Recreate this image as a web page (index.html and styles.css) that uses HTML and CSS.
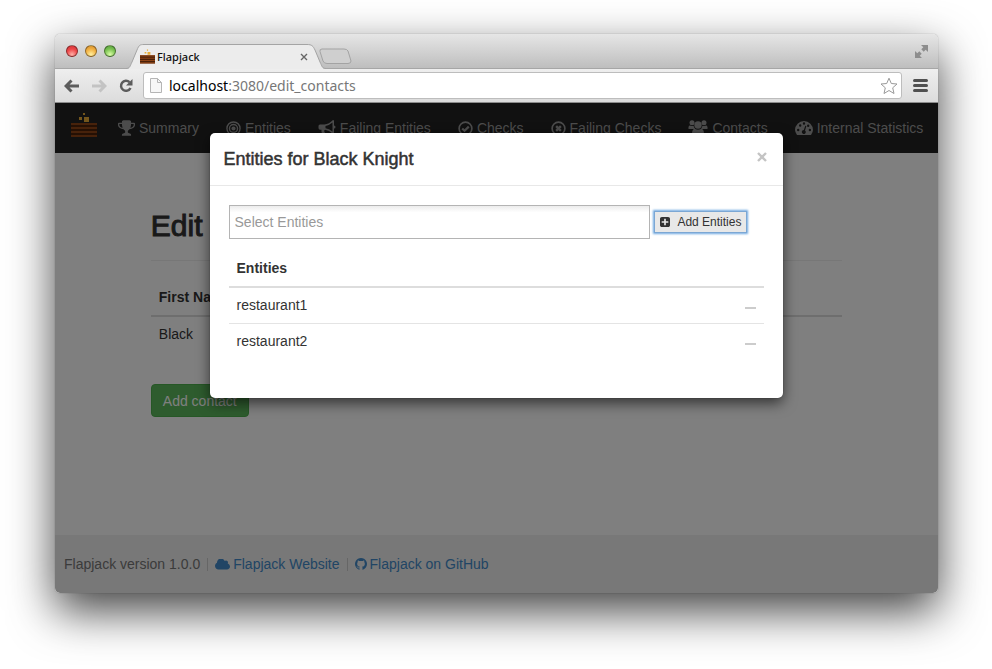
FILE: index.html
```html
<!DOCTYPE html>
<html lang="en">
<head>
<meta charset="utf-8">
<title>Flapjack</title>
<link rel="stylesheet" href="styles.css">
</head>
<body>
<svg class="defs" aria-hidden="true">
  <defs>
    <symbol id="flapjack" viewBox="0 0 26 26">
      <path fill="#e8ac38" d="M12 1h2v2h-2zM8 5h3v3H8zM13 5h5v5h-5z"/>
      <path class="stack-gap" d="M0 11h26v14H0z"/>
      <path class="stack" d="M0 11h26v2H0zM0 15h26v2H0zM0 19h26v2H0zM0 23h26v2H0z"/>
    </symbol>
    <symbol id="page" viewBox="0 0 12 15"><path d="M.5.5h7l4 4v10H.5z" fill="#f7f7f7" stroke="#b5b5b5"/><path d="M7.500 .5v4h4" fill="none" stroke="#b5b5b5"/></symbol>
  </defs>
</svg>
<div class="window">
  <header class="titlebar">
    <div class="lights">
      <button class="light red" aria-label="Close window"></button>
      <button class="light amber" aria-label="Minimise window"></button>
      <button class="light green" aria-label="Zoom window"></button>
    </div>
    <div class="tab">
      <svg class="tab-shape" viewBox="0 0 200 25" aria-hidden="true"><path d="M0 25C4 25 4 22 6 18L11 6C13 1 14 .5 18 .5H181C186 .5 187 2 189 6L194 18C196 22 196 25 200 25Z" fill="#ececec"/><path d="M0 24.500C4 24.500 4 22 6 18L11 6C13 1 14 .5 18 .5H181C186 .5 187 2 189 6L194 18C196 22 196 24.500 200 24.500" fill="none" stroke="#a4a4a4"/></svg>
      <svg class="favicon" aria-hidden="true"><use href="#flapjack"/></svg>
      <span class="tab-title">Flapjack</span>
      <button class="tab-close" aria-label="Close tab"><svg viewBox="0 0 8 8" width="8" height="8"><path d="M1 1l6 6M7 1L1 7" stroke="#666" stroke-width="1.400"/></svg></button>
    </div>
    <button class="new-tab" aria-label="New tab"><svg viewBox="0 0 33 17" width="33" height="17"><path d="M3 1H25Q28 1 29 3L32 13Q32 15.500 29 15.500H8Q5 15.500 4 13L1 3.500Q.5 1 3 1Z" fill="#cfcfcf" stroke="#a3a3a3"/></svg></button>
    <button class="fullscreen" aria-label="Full screen"><svg viewBox="0 0 15 15" width="15" height="15"><path d="M7 1h7v7l-2.300-2.300-2 2-2.400-2.400 2-2zM8 14H1V7l2.300 2.300 2-2 2.400 2.400-2 2z" fill="#8d8d8d"/></svg></button>
  </header>
  <div class="toolbar">
    <button class="tool" aria-label="Back"><svg viewBox="0 0 16 14" width="16" height="14"><path d="M7.500 1.500L2 7l5.500 5.500M2.500 7H15" fill="none" stroke="#5c5c5c" stroke-width="3"/></svg></button>
    <button class="tool" aria-label="Forward"><svg viewBox="0 0 16 14" width="16" height="14"><path d="M8.500 1.500L14 7l-5.500 5.500M13.500 7H1" fill="none" stroke="#c3c3c3" stroke-width="3"/></svg></button>
    <button class="tool" aria-label="Reload"><svg viewBox="0 0 16 14" width="16" height="14"><path d="M11.500 3.200A5 5 0 1 0 12.500 9" fill="none" stroke="#5c5c5c" stroke-width="2.500"/><path d="M14.500 0v6.500H8z" fill="#5c5c5c"/></svg></button>
    <div class="address">
      <svg width="12" height="15" aria-hidden="true"><use href="#page"/></svg>
      <span class="url"><b>localhost</b>:3080/edit_contacts</span>
      <button class="star" aria-label="Bookmark"><svg viewBox="0 0 18 18" width="18" height="18"><path d="M9 1.200l2.300 5.300 5.700.5-4.300 3.800 1.300 5.700L9 13.500l-5 3 1.300-5.700L1 7l5.700-.5z" fill="#fff" stroke="#999" stroke-linejoin="round"/></svg></button>
    </div>
    <button class="menu" aria-label="Menu"><svg viewBox="0 0 15 13" width="15" height="13"><path d="M1.500 1.500h12M1.500 6.500h12M1.500 11.500h12" stroke="#505050" stroke-width="3" stroke-linecap="round"/></svg></button>
  </div>
  <div class="viewport">
    <nav class="navbar">
      <a class="brand" href="#" aria-label="Flapjack home"><svg width="26" height="26"><use href="#flapjack"/></svg></a>
      <a href="#"><svg viewBox="64 128 1664 1536" width="17" height="16"><path d="M522 883q-74-162-74-371h-256v96q0 78 94.500 162t235.500 113zm1078-275v-96h-256q0 209-74 371 141-29 235.500-113t94.500-162zm128-128v128q0 71-41.500 143t-112 130-173 97.500-215.500 44.500q-42 54-95 95-38 34-52.500 72.500t-14.500 89.500q0 54 30.500 91t97.500 37q75 0 133.500 45.500t58.500 114.500v64q0 14-9 23t-23 9h-832q-14 0-23-9t-9-23v-64q0-69 58.500-114.500t133.500-45.500q67 0 97.500-37t30.500-91q0-51-14.500-89.500t-52.500-72.500q-53-41-95-95-113-5-215.500-44.500t-173-97.500-112-130-41.500-143v-128q0-40 28-68t68-28h288v-96q0-66 47-113t113-47h576q66 0 113 47t47 113v96h288q40 0 68 28t28 68z"/></svg>Summary</a>
      <a href="#"><svg viewBox="0 0 16 16" width="15" height="15"><g fill="none" stroke="currentColor" stroke-width="1.500"><circle cx="8" cy="8" r="7"/><circle cx="8" cy="8" r="4.300"/></g><circle cx="8" cy="8" r="2.200"/></svg>Entities</a>
      <a href="#"><svg viewBox="0 0 18 16" width="18" height="16"><path fill-rule="evenodd" d="M16 1v4.500a1.500 1.500 0 0 1 0 3V13q0 1-1 1-4-4-8-4.300-1.500.8-.6 2 .1 1 1.600 2-1 1.500-3.500 1-1.500-2.500-1-5H2Q.5 9.500.5 8V6Q.5 4.500 2 4.500h4.500Q11 4 15 0q1 0 1 1zM14.500 2.500Q11 5.500 7.500 5.900v2.300q3.500.4 7 3.300z"/></svg>Failing Entities</a>
      <a href="#"><svg viewBox="0 0 16 16" width="15" height="15"><g fill="none" stroke="currentColor"><circle cx="8" cy="8" r="6.800" stroke-width="1.800"/><path d="M4.500 8L7 10.500l4.500-4.500" stroke-width="2.300"/></g></svg>Checks</a>
      <a href="#"><svg viewBox="0 0 16 16" width="15" height="15"><g fill="none" stroke="currentColor"><circle cx="8" cy="8" r="6.800" stroke-width="1.800"/><path d="M5.500 5.500l5 5M10.500 5.500l-5 5" stroke-width="2.500"/></g></svg>Failing Checks</a>
      <a href="#"><svg viewBox="0 0 20 18" width="20" height="18"><circle cx="4" cy="3.800" r="2.500"/><circle cx="16" cy="3.800" r="2.500"/><circle cx="10" cy="6" r="3.700"/><path d="M.5 10V8q.5-2 1.500-1.500 2 1 3.500.3.500 2 1.800 3.200zM19.500 10V8q-.5-2-1.500-1.500-2 1-3.500.3-.5 2-1.800 3.200zM4 15q0-5 2.700-5.300 3.300 2 6.600 0Q16 10 16 15q0 2-2 2H6q-2 0-2-2z"/></svg>Contacts</a>
      <a href="#"><svg viewBox="0 0 18 16" width="18" height="16"><path fill-rule="evenodd" d="M2 15Q0 12 0 10a9 9 0 0 1 18 0q0 2-2 5zM2 10a1.200 1.200 0 1 0 2.400 0A1.200 1.200 0 1 0 2 10zM4 5.500a1.200 1.200 0 1 0 2.400 0A1.200 1.200 0 1 0 4 5.500zM7.800 3.500a1.200 1.200 0 1 0 2.400 0A1.200 1.200 0 1 0 7.800 3.500zM12 5.800a1.200 1.200 0 1 0 2.400 0A1.200 1.200 0 1 0 12 5.800zM13.700 10a1.200 1.200 0 1 0 2.400 0A1.200 1.200 0 1 0 13.700 10zM10.300 5.800L8.800 10a2 2 0 1 0 1.200.4l1.400-4.300z"/></svg>Internal Statistics</a>
    </nav>
    <main class="content">
      <h1>Edit contacts</h1>
      <table>
        <thead><tr><th>First Name</th></tr></thead>
        <tbody><tr><td>Black</td></tr></tbody>
      </table>
      <button class="add-contact">Add contact</button>
    </main>
    <footer class="footer">
      <span>Flapjack version 1.0.0</span>
      <i class="rule"></i>
      <a href="#"><svg viewBox="0 256 1920 1280" width="15" height="11"><path d="M1920 1152q0 159-112.500 271.500t-271.500 112.500h-1088q-185 0-316.500-131.500t-131.500-316.500q0-132 71-241.500t187-163.500q-2-28-2-43 0-212 150-362t362-150q158 0 286.500 88t187.500 230q70-62 166-62 106 0 181 75t75 181q0 75-41 138 129 30 213 134.500t84 239.500z"/></svg>Flapjack Website</a>
      <i class="rule"></i>
      <a href="#"><svg viewBox="128 128 1536 1536" width="12" height="12"><path d="M896 128q209 0 385.500 103t279.500 279.500 103 385.500q0 251-146.500 451.500t-378.500 277.500q-27 5-40-7t-13-30q0-3 .5-76.500t.5-134.500q0-97-52-142 57-6 102.500-18t94-39 81-66.500 53-105 20.500-150.500q0-119-79-206 37-91-8-204-28-9-81 11t-92 44l-38 24q-93-26-192-26t-192 26q-16-11-42.500-27t-83.500-38.500-85-13.500q-45 113-8 204-79 87-79 206 0 85 20.500 150t52.500 105 80.500 67 94 39 102.500 18q-39 36-49 103-21 10-45 15t-57 5-65.500-21.500-55.500-62.500q-19-32-48.500-52t-49.500-24l-20-3q-21 0-29 4.500t-5 11.500 9 14 13 12l7 5q22 10 43.500 38t31.500 51l10 23q13 38 44 61.500t67 30 69.500 7 55.500-3.500l23-4q0 38 .5 88.500t.5 54.500q0 18-13 30t-40 7q-232-77-378.500-277.500t-146.500-451.500q0-209 103-385.500t279.500-279.500 385.500-103z"/></svg>Flapjack on GitHub</a>
    </footer>
    <div class="backdrop">
      <section class="modal" role="dialog" aria-labelledby="modal-title">
        <header class="modal-header">
          <h2 id="modal-title">Entities for Black Knight</h2>
          <button class="close" aria-label="Close"><svg viewBox="0 0 10 10" width="10" height="10"><path d="M1 1l8 8M9 1L1 9" stroke="#c4c4c4" stroke-width="2.400"/></svg></button>
        </header>
        <div class="modal-body">
          <form class="picker">
            <input type="text" placeholder="Select Entities" aria-label="Select Entities">
            <button type="button" class="add"><svg viewBox="128 128 1536 1536" width="10" height="10"><path d="M1408 960v-128q0-26-19-45t-45-19h-320v-320q0-26-19-45t-45-19h-128q-26 0-45 19t-19 45v320h-320q-26 0-45 19t-19 45v128q0 26 19 45t45 19h320v320q0 26 19 45t45 19h128q26 0 45-19t19-45v-320h320q26 0 45-19t19-45zm256-544v960q0 119-84.500 203.500t-203.500 84.500h-960q-119 0-203.500-84.500t-84.500-203.500v-960q0-119 84.500-203.500t203.500-84.500h960q119 0 203.500 84.500t84.500 203.500z"/></svg>Add Entities</button>
          </form>
          <table>
            <thead><tr><th colspan="2">Entities</th></tr></thead>
            <tbody>
              <tr><td>restaurant1</td><td class="action"><button class="remove" aria-label="Remove restaurant1"></button></td></tr>
              <tr><td>restaurant2</td><td class="action"><button class="remove" aria-label="Remove restaurant2"></button></td></tr>
            </tbody>
          </table>
        </div>
      </section>
    </div>
  </div>
</div>
</body>
</html>
```
FILE: styles.css
```css
* { box-sizing: border-box; }

body {
  margin: 0;
  min-height: 100vh;
  padding: 34px 54px 76px 55px;
  display: flex;
  background: #fff;
  color: #333;
  font: 14px/20px "Liberation Sans", Arial, sans-serif;
}

button {
  padding: 0;
  border: 0;
  background: none;
  color: inherit;
  font: inherit;
}

svg { display: block; flex: none; fill: currentColor; }
a { text-decoration: none; }
.defs { position: absolute; width: 0; height: 0; }
.stack { fill: #8f4416; }
.stack-gap { fill: #4a2008; }

/* Browser window */
.window {
  flex: 1;
  min-width: 0;
  display: flex;
  flex-direction: column;
  border-radius: 5px;
  box-shadow: 0 0 1px rgba(0, 0, 0, .5), 0 18px 46px rgba(0, 0, 0, .74);
}

.titlebar {
  display: flex;
  align-items: flex-end;
  height: 35px;
  padding: 0 9px 0 11px;
  border-bottom: 1px solid #a6a6a6;
  border-radius: 5px 5px 0 0;
  background: linear-gradient(#e6e6e6, #bebebe);
}

.lights { display: flex; gap: 7px; align-self: center; }

.light {
  width: 12px;
  height: 12px;
  border: 1px solid rgba(0, 0, 0, .4);
  border-radius: 50%;
}
.red { background: radial-gradient(circle at 50% 85%, #ffb0a8, #ee4648 55%, #c93436); }
.amber { background: radial-gradient(circle at 50% 85%, #fff0a0, #f2b142 55%, #cf8a2c); }
.green { background: radial-gradient(circle at 50% 85%, #dcffa8, #7dc454 55%, #529a3a); }

.tab {
  position: relative;
  display: flex;
  align-items: center;
  gap: 2px;
  width: 200px;
  height: 25px;
  margin: 0 -7px -1px 10px;
  padding: 0 18px 0 14px;
}
.tab-shape { position: absolute; inset: 0; width: 200px; height: 25px; }
.favicon, .tab-title, .tab-close { position: relative; }
.favicon { width: 15px; height: 15px; }
.tab-title { flex: 1; color: #111; font: 500 11px/16px "Noto Sans", sans-serif; }

.new-tab { margin-bottom: 3px; }
.fullscreen { margin-left: auto; align-self: center; }

.toolbar {
  display: flex;
  align-items: center;
  gap: 11px;
  height: 34px;
  padding: 0 10px 0 9px;
  border-bottom: 1px solid #8c8c8c;
  background: linear-gradient(#eee, #dcdcdc);
}

.address {
  flex: 1;
  display: flex;
  align-items: center;
  gap: 7px;
  height: 27px;
  margin-left: -2px;
  padding: 0 3px 0 6px;
  border: 1px solid #bdbdbd;
  border-radius: 3px;
  background: #fff;
}
.url { flex: 1; color: #777; font: 14px/20px "Noto Sans", sans-serif; }
.url b { color: #000; font-weight: 400; }

/* Page */
.viewport {
  position: relative;
  flex: 1;
  display: flex;
  flex-direction: column;
  overflow: hidden;
  border-radius: 0 0 5px 5px;
  background: #fff;
}

.navbar {
  display: flex;
  align-items: center;
  gap: 27px;
  height: 50px;
  padding: 0 16px;
  background: #222;
  white-space: nowrap;
}
.navbar a { display: flex; align-items: center; gap: 4px; color: #999; }
.navbar .brand { margin: -6px -6px 0 0; }

.content {
  flex: 1;
  width: 78.3%;
  margin: 0 auto;
  padding-top: 55px;
}

h1, h2 { margin: 0; font-weight: 400; -webkit-text-stroke: 1px currentColor; }
h1 {
  padding-bottom: 16px;
  border-bottom: 1px solid #eee;
  font-size: 30px;
  line-height: 36px;
}

table { width: 100%; border-collapse: collapse; text-align: left; line-height: 19px; }
th, td { padding: 8px; }
th { border-bottom: 2px solid #ddd; }
.content table { margin: 19px 0 32px; }

.add-contact {
  height: 33px;
  padding: 0 11px;
  border: 1px solid #4cae4c;
  border-radius: 4px;
  background: #5cb85c;
  color: #fff;
}

.footer {
  display: flex;
  align-items: center;
  gap: 7px;
  height: 58px;
  padding: 0 9px;
  background: #f0f0f0;
  color: #777;
}
.footer a { display: flex; align-items: center; gap: 3px; color: #428bca; }
.rule { width: 1px; height: 13px; background: #ccc; }

/* Dialog */
.backdrop {
  position: absolute;
  inset: 0;
  padding-top: 30px;
  background: rgba(0, 0, 0, .5);
}

.modal {
  width: 65%;
  margin: 0 auto;
  border-radius: 5px;
  background: #fff;
  box-shadow: 0 0 1px rgba(0, 0, 0, .6), 0 5px 14px rgba(0, 0, 0, .6);
}

.modal-header {
  display: flex;
  justify-content: space-between;
  align-items: center;
  height: 53px;
  padding: 0 16px 0 14px;
  border-bottom: 1px solid #e8e8e8;
}
.close { padding-bottom: 4px; }
h2 { font-size: 18px; line-height: 24px; -webkit-text-stroke-width: .5px; }
.modal-body { padding: 19px 19px 39px; }

.picker { display: flex; align-items: center; gap: 4px; margin: 0 17px 12px 0; }

input {
  flex: 1;
  min-width: 0;
  height: 34px;
  padding: 0 5px;
  border: 1px solid #b4b4b4;
  background: linear-gradient(#ececec, #fff 20%);
  font: inherit;
}
input::placeholder { color: #999; }

.add {
  display: flex;
  align-items: center;
  gap: 7px;
  height: 22px;
  padding: 0 5px;
  border: 1px solid #7ba7d4;
  background: #e8e8e8;
  font-size: 12px;
  box-shadow: 0 0 2px 1px #6ea8e0;
}

.modal tr + tr td { border-top: 1px solid #e4e4e4; }
.modal td.action { width: 28px; }
.remove { display: block; width: 11px; height: 2px; margin: 4px 0 0 1px; background: #ccc; }
```
